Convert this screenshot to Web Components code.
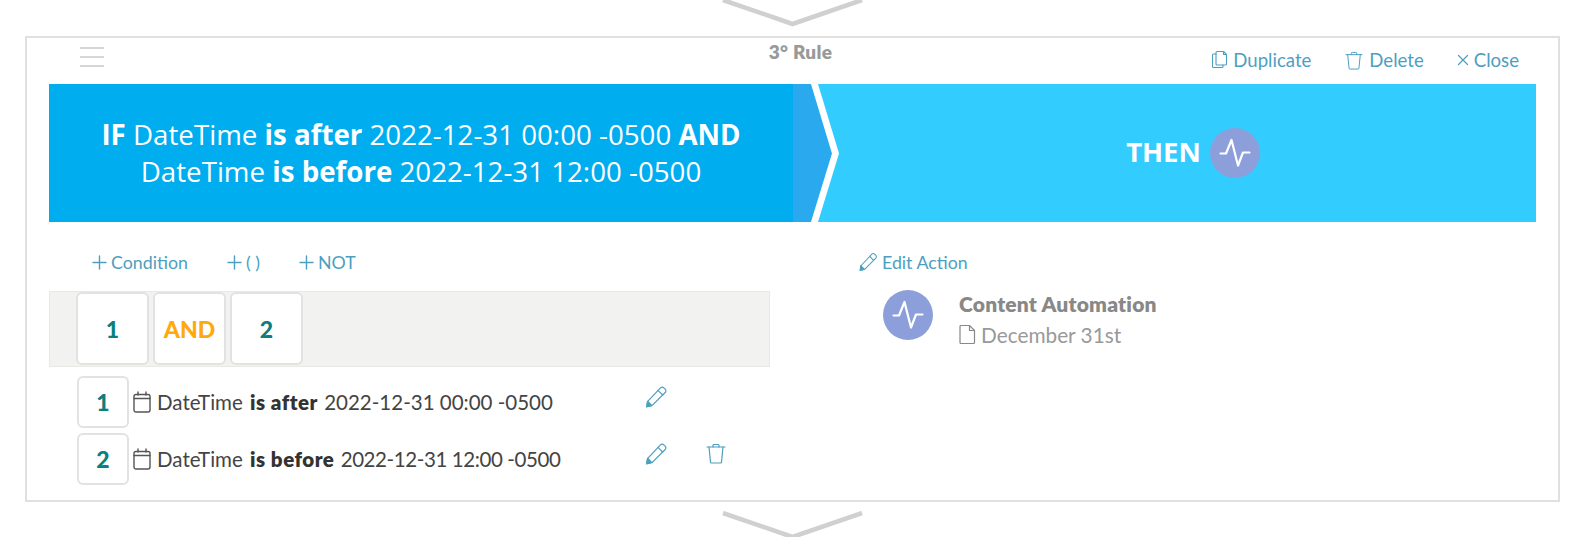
<!DOCTYPE html>
<html>
<head>
<meta charset="utf-8">
<title>Rule</title>
<style>
    html, body { margin: 0; background: #fff; }
    body { width: 1590px; height: 537px; overflow: hidden; font-family: 'Lato', 'Liberation Sans', sans-serif; }
</style>
</head>
<body>
<flow-arrow style="height:36px" data-top="-2"></flow-arrow>
<rule-card>
    <rule-header title-text="3° Rule"></rule-header>
    <rule-banner>
        <span slot="if"><b>IF</b> DateTime <b>is after</b> 2022-12-31 00:00 -0500 <b>AND</b><br>DateTime <b>is before</b> 2022-12-31 12:00 -0500</span>
    </rule-banner>
    <rule-body></rule-body>
</rule-card>
<flow-arrow style="height:35px" data-top="9"></flow-arrow>

<script>
const icons = {
    copy: '<path d="M6 1.5h6.5l3 3V14a1 1 0 0 1-1 1H6a1 1 0 0 1-1-1V2.500a1 1 0 0 1 1-1z"/><path d="M12.500 1.500v3h3"/><path d="M5 4H2.500a1 1 0 0 0-1 1v11.500a1 1 0 0 0 1 1H11a1 1 0 0 0 1-1V15"/>',
    trash: '<path d="M1 4h18"/><path d="M7 4V2.500a1 1 0 0 1 1-1h4a1 1 0 0 1 1 1V4"/><path d="M3 4l1.500 15a1 1 0 0 0 1 1h9a1 1 0 0 0 1-1L17 4"/>',
    close: '<path d="M1.500 1.500l9 9M10.500 1.500l-9 9"/>',
    plus: '<path d="M7.500 1v13M1 7.500h13"/>',
    pencil: '<path d="M15.500 1.800a2.300 2.300 0 0 1 3.300 0l1.400 1.400a2.300 2.300 0 0 1 0 3.300L7 19.700l-5.500 1.300 1.200-5.600z"/><path d="M13 4.300l4.700 4.700"/><path d="M2.700 15.400l3.900 3.900" /><path d="M2 19l1 1.500 3-1-3.500-4z" fill="currentColor"/>',
    calendar: '<rect x="1" y="3.500" width="16" height="17.500" rx="2"/><path d="M1 7.500h16M5 1v3M13 1v3"/>',
    doc: '<path d="M1 2.500a1 1 0 0 1 1-1h8.500l5 5V18.500a1 1 0 0 1-1 1H2a1 1 0 0 1-1-1z"/><path d="M10.500 1.500v5h5"/>'
};

class RuleIcon extends HTMLElement {
    constructor() {
        super();
        this.attachShadow({mode: 'open'});
    }
    connectedCallback() {
        const w = this.getAttribute('w') || 18;
        const h = this.getAttribute('h') || 18;
        this.shadowRoot.innerHTML = `
        <style>
            :host { display: inline-flex; flex: none; width: ${w}px; height: ${h}px; color: inherit; }
            svg { display: block; fill: none; stroke: currentColor; stroke-width: ${this.getAttribute('sw') || 1.2}; stroke-linecap: round; stroke-linejoin: round; }
        </style>
        <svg width="${w}" height="${h}" viewBox="0 0 ${w} ${h}">${icons[this.getAttribute('name')]}</svg>`;
    }
}
customElements.define('rule-icon', RuleIcon);

const arrowTemplate = document.createElement('template');
arrowTemplate.innerHTML = `
<style>
    :host { display: block; width: 1590px; overflow: hidden; }
    svg { display: block; margin-left: 722px; }
</style>
<svg width="142" height="30" viewBox="0 0 142 30"><path d="M1 2l69.500 24L140 2" fill="none" stroke="#d0d0d0" stroke-width="4.500"/></svg>`;

class FlowArrow extends HTMLElement {
    constructor() {
        super();
        this.attachShadow({mode: 'open'});
        this.shadowRoot.append(arrowTemplate.content.cloneNode(true));
        this.shadowRoot.querySelector('svg').style.marginTop = this.dataset.top + 'px';
    }
}
customElements.define('flow-arrow', FlowArrow);

const cardTemplate = document.createElement('template');
cardTemplate.innerHTML = `
<style>
    :host {
        display: block;
        box-sizing: border-box;
        width: 1535px;
        height: 466px;
        margin-left: 25px;
        border: 2px solid #e0e0e0;
        background: #fff;
    }
</style>
<slot></slot>`;

class RuleCard extends HTMLElement {
    constructor() {
        super();
        this.attachShadow({mode: 'open'});
        this.shadowRoot.append(cardTemplate.content.cloneNode(true));
    }
}
customElements.define('rule-card', RuleCard);

const headerTemplate = document.createElement('template');
headerTemplate.innerHTML = `
<style>
    :host {
        display: grid;
        grid-template-columns: 1fr auto 1fr;
        height: 46px;
        padding: 0 39px 0 53px;
        font-family: 'Lato', sans-serif;
    }
    .burger { display: flex; flex-direction: column; gap: 7px; width: 24px; padding-top: 9px; }
    .burger i { display: block; height: 2px; background: #d6d6d6; }
    h1 {
        margin: 5px 0 0 0;
        padding-left: 2px;
        font-size: 19px;
        line-height: 18px;
        letter-spacing: .3px;
        font-weight: 800;
        color: #999;
    }
    nav { display: flex; justify-content: flex-end; gap: 33px; padding-top: 12px; color: #4c9fbf; font-size: 18.600px; line-height: 20px; }
    a { display: flex; align-items: center; gap: 5px; height: 20px; }
    .trash { transform: scale(.9); }
    .copy { margin-top: -2px; }
</style>
<div class="burger"><i></i><i></i><i></i></div>
<h1></h1>
<nav>
    <a><rule-icon class="copy" name="copy" w="17" h="19" sw="1.100"></rule-icon>Duplicate</a>
    <a><rule-icon class="trash" name="trash" w="20" h="21" sw="1.100"></rule-icon>Delete</a>
    <a><rule-icon name="close" w="12" h="12"></rule-icon>Close</a>
</nav>`;

class RuleHeader extends HTMLElement {
    constructor() {
        super();
        this.attachShadow({mode: 'open'});
        this.shadowRoot.append(headerTemplate.content.cloneNode(true));
    }
    connectedCallback() {
        this.shadowRoot.querySelector('h1').textContent = this.getAttribute('title-text');
    }
}
customElements.define('rule-header', RuleHeader);

class PulseBadge extends HTMLElement {
    constructor() {
        super();
        this.attachShadow({mode: 'open'});
        this.shadowRoot.innerHTML = `
        <style>
            :host { display: inline-flex; flex: none; width: 50px; height: 50px; border-radius: 50%; background: #8c9fdb; }
            svg { display: block; }
        </style>
        <svg width="50" height="50" viewBox="0 0 50 50"><path d="M10.500 25.500h5.500l5.500-13.500 6.500 25.500 5-13h6.500" fill="none" stroke="#fff" stroke-width="2.200" stroke-linecap="round" stroke-linejoin="round"/></svg>`;
    }
}
customElements.define('pulse-badge', PulseBadge);

const bannerTemplate = document.createElement('template');
bannerTemplate.innerHTML = `
<style>
    :host {
        display: flex;
        height: 138px;
        margin: 0 22px 0 22px;
        background: #33ccff;
        color: #fff;
        font-family: 'Open Sans', sans-serif;
    }
    .if {
        flex: none;
        width: 744px;
        display: flex;
        align-items: center;
        justify-content: center;
        text-align: center;
        background: #00adef;
        font-size: 27.700px;
        line-height: 37px;
    }
    svg { flex: none; display: block; }
    .then {
        flex: 1;
        display: flex;
        align-items: center;
        justify-content: center;
        gap: 9px;
        padding-left: 11px;
        font-size: 27.500px;
        font-weight: 700;
    }
    .then span { margin-top: -4px; }
</style>
<div class="if"><slot name="if"></slot></div>
<svg width="46" height="138" viewBox="0 0 46 139" preserveAspectRatio="none">
    <polygon points="0,0 18,0 39,70 18,139 0,139" fill="#2aa9ee"/>
    <polygon points="18,0 25,0 46,70 25,139 18,139 39,70" fill="#fff"/>
</svg>
<div class="then"><span>THEN</span><pulse-badge></pulse-badge></div>`;

class RuleBanner extends HTMLElement {
    constructor() {
        super();
        this.attachShadow({mode: 'open'});
        this.shadowRoot.append(bannerTemplate.content.cloneNode(true));
    }
}
customElements.define('rule-banner', RuleBanner);

class ConditionTile extends HTMLElement {
    constructor() {
        super();
        this.attachShadow({mode: 'open'});
        this.shadowRoot.innerHTML = `
        <style>
            :host {
                display: flex;
                flex: none;
                box-sizing: border-box;
                align-items: center;
                justify-content: center;
                width: var(--tile, 73px);
                height: var(--tile, 73px);
                border: 2px solid #e2e2e2;
                border-radius: 6px;
                background: #fff;
                color: #0a7f7f;
                font-size: 23px;
                font-weight: 900;
            }
            :host([op]) { color: #ffa90a; }
        </style>
        <slot></slot>`;
    }
}
customElements.define('condition-tile', ConditionTile);

const rowTemplate = document.createElement('template');
rowTemplate.innerHTML = `
<style>
    :host {
        display: grid;
        grid-template-columns: 52px 516px 22px 39px 20px;
        height: 52px;
        padding-left: 28px;
        --tile: 52px;
        color: #444;
        font-size: 20.500px;
    }
    .text { display: flex; align-items: center; gap: 6px; padding-left: 4px; }
    .edit, .del { padding-top: 10px; color: #4c9fbf; grid-row: 1; }
    .edit { grid-column: 3; }
    .del { grid-column: 5; }
    ::slotted(b) { font-weight: 800; color: #333; letter-spacing: .5px; margin: 0 1px 0 2px; }
    ::slotted(i) { font-style: normal; letter-spacing: -.4px; }
</style>
<condition-tile><slot name="num"></slot></condition-tile>
<div class="text"><rule-icon name="calendar" w="18" h="22" sw="1.400" style="color:#555"></rule-icon><span><slot></slot></span></div>
<div class="edit"><rule-icon name="pencil" w="22" h="22" sw="1.200"></rule-icon></div>
<div class="del"><rule-icon name="trash" w="20" h="21" sw="1.200"></rule-icon></div>`;

class ConditionRow extends HTMLElement {
    constructor() {
        super();
        this.attachShadow({mode: 'open'});
        this.shadowRoot.append(rowTemplate.content.cloneNode(true));
    }
    connectedCallback() {
        if (!this.hasAttribute('removable')) this.shadowRoot.querySelector('.del').style.visibility = 'hidden';
    }
}
customElements.define('condition-row', ConditionRow);

const bodyTemplate = document.createElement('template');
bodyTemplate.innerHTML = `
<style>
    :host {
        display: grid;
        grid-template-columns: 721px 1fr;
        column-gap: 87px;
        margin-left: 22px;
        font-family: 'Lato', sans-serif;
    }
    .bar { display: flex; align-items: center; height: 40px; margin-top: 20px; color: #4c9fbf; font-size: 17.800px; }
    .tools { gap: 39px; padding-left: 43px; }
    .tools a { display: flex; align-items: center; gap: 4px; }
    .tree {
        box-sizing: border-box;
        display: flex;
        gap: 4px;
        height: 76px;
        margin-top: 9px;
        padding: 0 0 1px 26px;
        align-items: center;
        background: #f2f2f0;
        border: 1px solid #e9e9e3;
    }
    .rows { display: flex; flex-direction: column; gap: 5px; margin-top: 9px; }
    .edit-link { gap: 3px; }
    .action { display: flex; gap: 26px; margin: 8px 0 0 26px; }
    .action h2 { margin: 1px 0 0 0; font-size: 21px; line-height: 26px; letter-spacing: .2px; font-weight: 800; color: #888; }
    .action p { display: flex; align-items: center; gap: 5px; margin: 7px 0 0 0; font-size: 20.800px; line-height: 20px; color: #999; }
</style>
<section>
    <div class="bar tools">
        <a><rule-icon name="plus" w="15" h="15" sw="1.400"></rule-icon>Condition</a>
        <a><rule-icon name="plus" w="15" h="15" sw="1.400"></rule-icon>( )</a>
        <a><rule-icon name="plus" w="15" h="15" sw="1.400"></rule-icon>NOT</a>
    </div>
    <div class="tree">
        <condition-tile>1</condition-tile>
        <condition-tile op>AND</condition-tile>
        <condition-tile>2</condition-tile>
    </div>
    <div class="rows">
        <condition-row><span slot="num">1</span>DateTime <b>is after</b> 2022-12-31 00:00 -0500</condition-row>
        <condition-row removable><span slot="num">2</span>DateTime <b>is before</b> <i>2022-12-31 12:00 -0500</i></condition-row>
    </div>
</section>
<section>
    <div class="bar edit-link"><rule-icon name="pencil" w="22" h="22" sw="1.200" style="transform:scale(.85)"></rule-icon>Edit Action</div>
    <div class="action">
        <pulse-badge></pulse-badge>
        <div>
            <h2>Content Automation</h2>
            <p><rule-icon name="doc" w="17" h="21" sw="1.200" style="color:#888"></rule-icon>December 31st</p>
        </div>
    </div>
</section>`;

class RuleBody extends HTMLElement {
    constructor() {
        super();
        this.attachShadow({mode: 'open'});
        this.shadowRoot.append(bodyTemplate.content.cloneNode(true));
    }
}
customElements.define('rule-body', RuleBody);
</script>
</body>
</html>
